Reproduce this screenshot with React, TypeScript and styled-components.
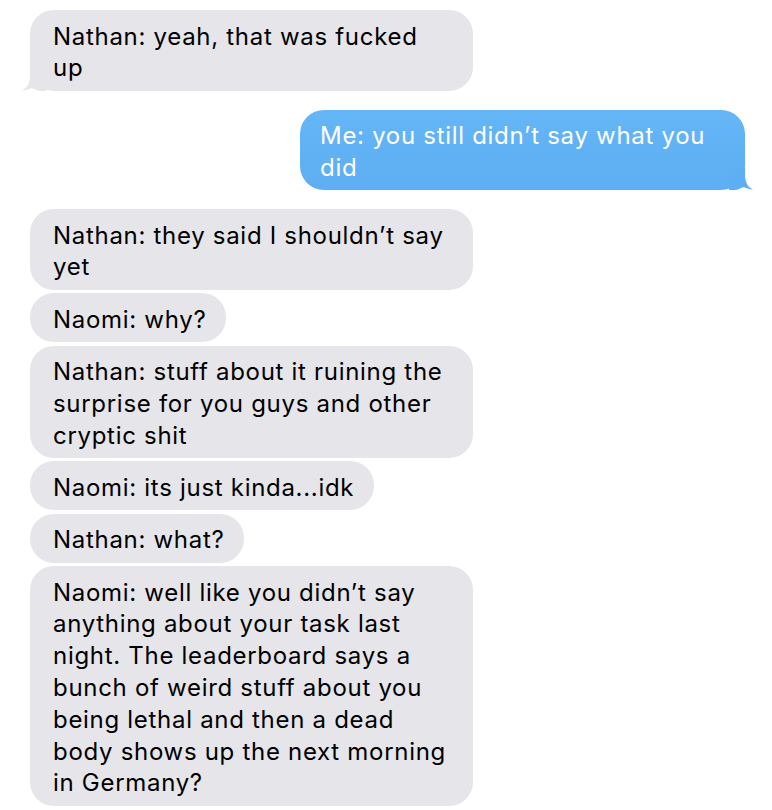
import React from "react";
import styled, { createGlobalStyle } from "styled-components";

const GlobalStyle = createGlobalStyle`
  html, body {
    margin: 0;
    padding: 0;
    background: #ffffff;
  }
  body {
    font-family: Inter, "Noto Sans", "Liberation Sans", sans-serif;
    -webkit-font-smoothing: antialiased;
  }
`;

const Thread = styled.div`
  display: flex;
  flex-direction: column;
  gap: 19px;
  padding: 10px 27px 0 30px;
  width: 772px;
  box-sizing: border-box;
`;

const Group = styled.div<{ $mine?: boolean }>`
  display: flex;
  flex-direction: column;
  gap: 3.5px;
  align-items: ${(p) => (p.$mine ? "flex-end" : "flex-start")};
`;

const Bubble = styled.div<{ $mine?: boolean }>`
  position: relative;
  max-width: ${(p) => (p.$mine ? "445px" : "443px")};
  box-sizing: border-box;
  padding: ${(p) => (p.$mine ? "10.5px 22px 6.5px 20px" : "10.5px 20px 6.5px 23px")};
  border-radius: 24px;
  font-size: 24px;
  line-height: 31.8px;
  letter-spacing: 0.7px;
  color: ${(p) => (p.$mine ? "#ffffff" : "#000000")};
  background: ${(p) =>
    p.$mine ? "linear-gradient(180deg, #64b6f6 0%, #5eaef3 100%)" : "#e5e5ea"};
`;

const Tail = styled.svg<{ $mine?: boolean }>`
  position: absolute;
  bottom: 0;
  width: 24px;
  height: 22px;
  ${(p) => (p.$mine ? "right: -8px; transform: scaleX(-1);" : "left: -8px;")}
`;

const TailShape: React.FC<{ mine?: boolean }> = ({ mine }) => (
  <Tail $mine={mine} viewBox="0 0 24 22" aria-hidden>
    <path
      d="M8 0 L24 0 L24 22 L19 22 C15 22 12 19.5 9.5 19.2 C7 19 4 21.6 0 21.6 C5 19 8 15 8 6 Z"
      fill={mine ? "#5eaef3" : "#e5e5ea"}
    />
  </Tail>
);

type Msg = { text: string; tail?: boolean };

const groups: { mine?: boolean; msgs: Msg[] }[] = [
  { msgs: [{ text: "Nathan: yeah, that was fucked up", tail: true }] },
  { mine: true, msgs: [{ text: "Me: you still didn\u2019t say what you did", tail: true }] },
  {
    msgs: [
      { text: "Nathan: they said I shouldn\u2019t say yet" },
      { text: "Naomi: why?" },
      { text: "Nathan: stuff about it ruining the surprise for you guys and other cryptic shit" },
      { text: "Naomi: its just kinda...idk" },
      { text: "Nathan: what?" },
      {
        text:
          "Naomi: well like you didn\u2019t say anything about your task last night. The leaderboard says a bunch of weird stuff about you being lethal and then a dead body shows up the next morning in Germany?",
      },
    ],
  },
];

export default function App() {
  return (
    <>
      <GlobalStyle />
      <Thread>
        {groups.map((g, gi) => (
          <Group key={gi} $mine={g.mine}>
            {g.msgs.map((m, mi) => (
              <Bubble key={mi} $mine={g.mine}>
                {m.text}
                {m.tail && <TailShape mine={g.mine} />}
              </Bubble>
            ))}
          </Group>
        ))}
      </Thread>
    </>
  );
}
